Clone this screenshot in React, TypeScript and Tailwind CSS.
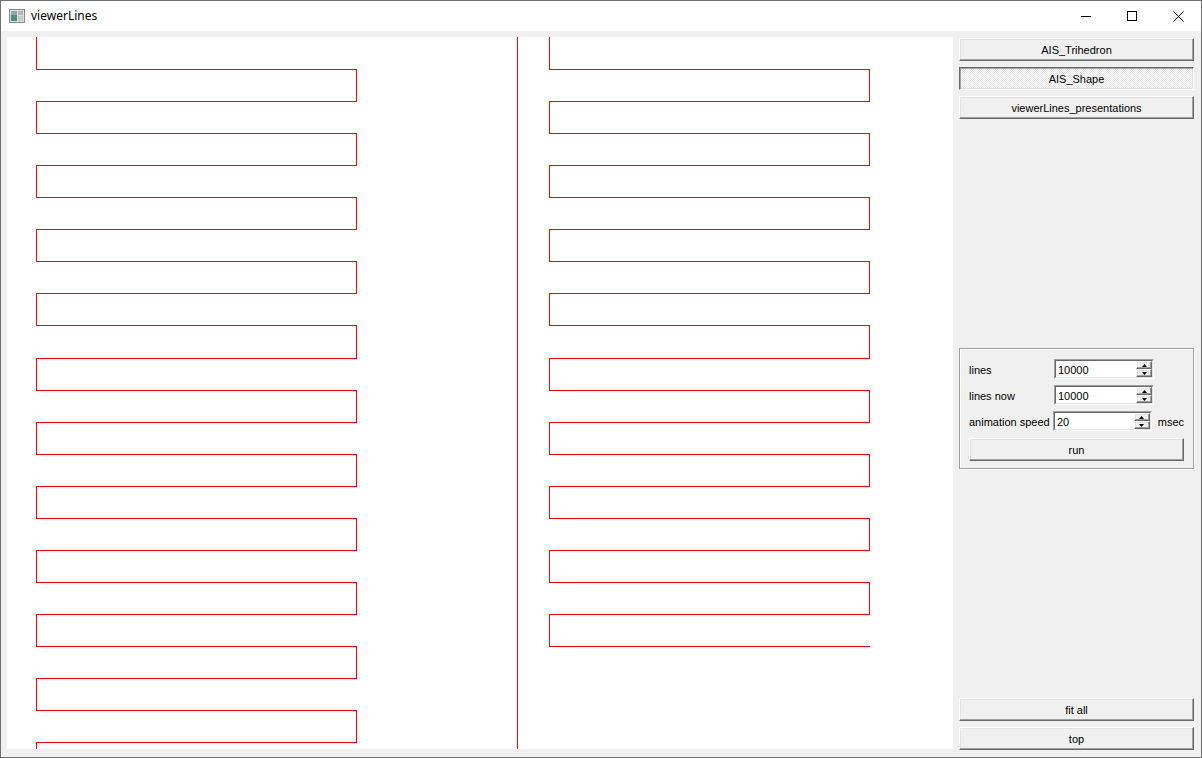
import React from "react";

const FONT = "font-['Liberation_Sans',Arial,sans-serif]";

// classic raised win button
const raised =
  "border border-t-white border-l-white border-b-[#696969] border-r-[#696969] bg-[#f0f0f0] shadow-[inset_-1px_-1px_0_#a0a0a0,inset_1px_1px_0_#e3e3e3]";
const sunkenChecked =
  "border border-t-[#696969] border-l-[#696969] border-b-white border-r-white shadow-[inset_1px_1px_0_#a0a0a0,inset_-1px_-1px_0_#e3e3e3] bg-[image:repeating-conic-gradient(#ffffff_0%_25%,#e6e6e6_0%_50%)] [background-size:2px_2px]";

function Button({ label, checked, className }: { label: string; checked?: boolean; className?: string }) {
  return (
    <div
      className={`flex h-[23px] items-center justify-center pt-[1px] text-[11px] text-black ${checked ? sunkenChecked : raised} ${className ?? ""}`}
    >
      {label}
    </div>
  );
}

function SpinBox({ value }: { value: string }) {
  return (
    <div className="flex h-[20px] w-[100px] border border-t-[#a0a0a0] border-l-[#a0a0a0] border-b-white border-r-white">
      <div className="flex flex-1 border border-t-[#696969] border-l-[#696969] border-b-[#e3e3e3] border-r-[#e3e3e3] bg-white">
        <span className="flex-1 pl-[2px] pt-[1px] text-[11px] leading-[16px] text-black">{value}</span>
        <div className="flex w-[16px] flex-col">
          {["up", "down"].map((d) => (
            <div key={d} className={`flex flex-1 items-center justify-center ${raised}`}>
              <svg width="5" height="3" viewBox="0 0 5 3">
                {d === "up" ? <path d="M2.5 0L5 3H0z" fill="#000" /> : <path d="M0 0h5L2.5 3z" fill="#000" />}
              </svg>
            </div>
          ))}
        </div>
      </div>
    </div>
  );
}

function SpinRow({ label, value, unit }: { label: string; value: string; unit?: string }) {
  return (
    <div className="flex h-[20px] items-center">
      <span className="w-[85px] pt-[2px] text-[11px] text-black">{label}</span>
      <SpinBox value={value} />
      {unit && <span className="ml-[6px] pt-[2px] text-[11px] text-black">{unit}</span>}
    </div>
  );
}

function serpentine(xl: number, xr: number, rows: number, tail: number | null) {
  const pts: string[] = [`${xl + 0.5},0`];
  for (let k = 0; k < rows; k++) {
    const y = Math.round(32 + k * 32.06) + 0.5;
    const [a, b] = k % 2 === 0 ? [xl, xr] : [xr, xl];
    pts.push(`${a + 0.5},${y}`, `${b + 0.5},${y}`);
  }
  if (tail !== null) {
    const last = rows % 2 === 0 ? xl : xr;
    pts.push(`${last + 0.5},${tail}`);
  }
  return pts.join(" ");
}

function Viewport() {
  return (
    <div className="h-[712px] w-[946px] overflow-hidden bg-white">
      <svg width="946" height="712" shapeRendering="crispEdges">
        <polyline points={serpentine(29, 349, 22, 712)} fill="none" stroke="#ff0000" strokeWidth="1" />
        <line x1="510.5" y1="0" x2="510.5" y2="712" stroke="#ff0000" strokeWidth="1" />
        <polyline points={serpentine(542, 862, 19, null)} fill="none" stroke="#ff0000" strokeWidth="1" />
      </svg>
    </div>
  );
}

function AppIcon() {
  return (
    <svg width="16" height="14" viewBox="0 0 16 14">
      <rect x="0.5" y="0.5" width="15" height="13" fill="#dcdcdc" stroke="#8a8a8a" />
      <rect x="2" y="2" width="6" height="10" fill="#4f8f86" />
      <rect x="2" y="2" width="6" height="4" fill="#7fb0b8" />
      <rect x="9" y="2" width="5" height="4" fill="#b8b8b8" />
      <rect x="9" y="7" width="5" height="5" fill="#c8c8c8" />
    </svg>
  );
}

export default function App() {
  return (
    <div className={`flex h-[758px] w-[1202px] flex-col border border-[#707070] bg-[#f0f0f0] ${FONT}`}>
      {/* Title bar */}
      <div className="flex h-[30px] items-center bg-white">
        <div className="ml-[8px] mr-[6px] flex items-center">
          <AppIcon />
        </div>
        <span className="font-['Noto_Sans',sans-serif] text-[12px] text-black">viewerLines</span>
        <div className="ml-auto flex h-full">
          <div className="flex w-[46px] items-center justify-center">
            <svg width="10" height="10" viewBox="0 0 10 10">
              <line x1="0" y1="5.5" x2="10" y2="5.5" stroke="#000" strokeWidth="1" />
            </svg>
          </div>
          <div className="flex w-[46px] items-center justify-center">
            <svg width="10" height="10" viewBox="0 0 10 10">
              <rect x="0.5" y="0.5" width="9" height="9" fill="none" stroke="#000" strokeWidth="1" />
            </svg>
          </div>
          <div className="flex w-[46px] items-center justify-center">
            <svg width="11" height="11" viewBox="0 0 11 11">
              <path d="M0.5 0.5L10.5 10.5M10.5 0.5L0.5 10.5" stroke="#000" strokeWidth="1" />
            </svg>
          </div>
        </div>
      </div>

      {/* Content */}
      <div className="flex flex-1 gap-[6px] pl-[6px] pt-[6px]">
        <Viewport />
        <div className="flex h-[713px] w-[235px] flex-col pt-[1px]">
          <div className="flex flex-col gap-[6px]">
            <Button label="AIS_Trihedron" />
            <Button label="AIS_Shape" checked />
            <Button label="viewerLines_presentations" />
          </div>
          <div className="flex-1" />
          <div className="flex h-[121px] flex-col gap-[6px] border border-[#a0a0a0] px-[9px] pt-[10px] shadow-[inset_1px_1px_0_#ffffff,1px_1px_0_#ffffff]">
            <SpinRow label="lines" value="10000" />
            <SpinRow label="lines now" value="10000" />
            <SpinRow label="animation speed" value="20" unit="msec" />
            <Button label="run" className="mt-[1px] h-[22px]" />
          </div>
          <div className="flex-1" />
          <div className="flex flex-col gap-[6px]">
            <Button label="fit all" />
            <Button label="top" />
          </div>
        </div>
      </div>
    </div>
  );
}
